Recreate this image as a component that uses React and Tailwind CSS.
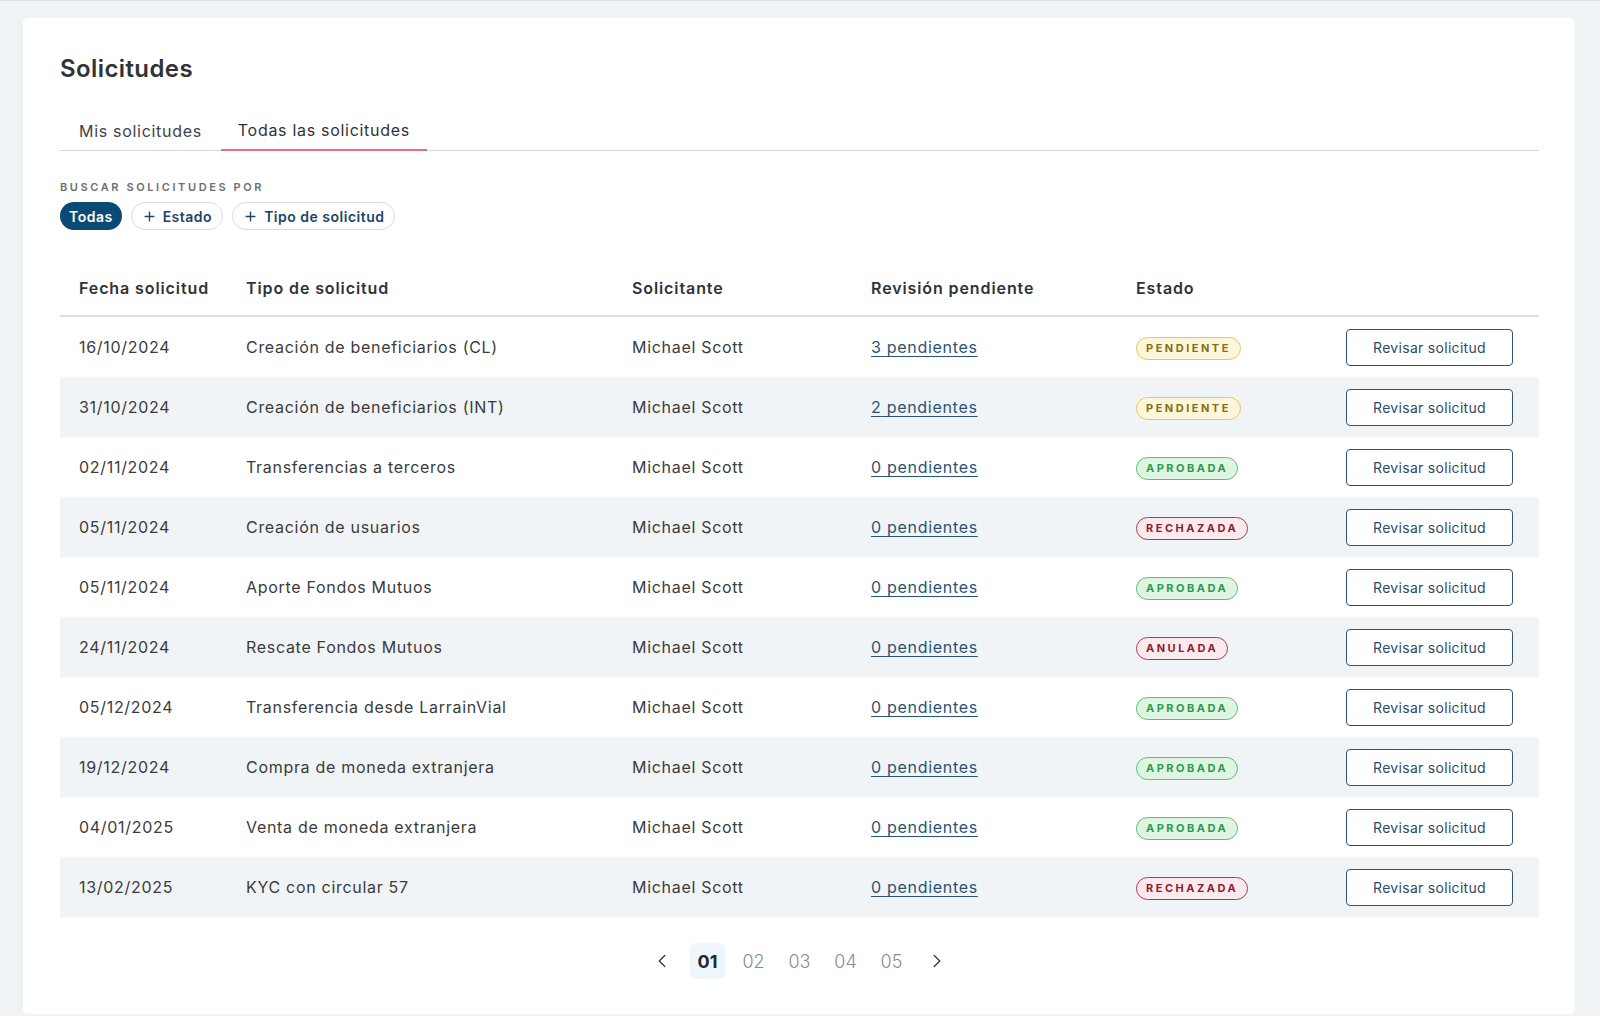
import { ChevronLeft, ChevronRight, Plus } from 'lucide-react';

const filas = [
  { fecha: '16/10/2024', tipo: 'Creación de beneficiarios (CL)', pendientes: 3, estado: 'PENDIENTE' },
  { fecha: '31/10/2024', tipo: 'Creación de beneficiarios (INT)', pendientes: 2, estado: 'PENDIENTE' },
  { fecha: '02/11/2024', tipo: 'Transferencias a terceros', pendientes: 0, estado: 'APROBADA' },
  { fecha: '05/11/2024', tipo: 'Creación de usuarios', pendientes: 0, estado: 'RECHAZADA' },
  { fecha: '05/11/2024', tipo: 'Aporte Fondos Mutuos', pendientes: 0, estado: 'APROBADA' },
  { fecha: '24/11/2024', tipo: 'Rescate Fondos Mutuos', pendientes: 0, estado: 'ANULADA' },
  { fecha: '05/12/2024', tipo: 'Transferencia desde LarrainVial', pendientes: 0, estado: 'APROBADA' },
  { fecha: '19/12/2024', tipo: 'Compra de moneda extranjera', pendientes: 0, estado: 'APROBADA' },
  { fecha: '04/01/2025', tipo: 'Venta de moneda extranjera', pendientes: 0, estado: 'APROBADA' },
  { fecha: '13/02/2025', tipo: 'KYC con circular 57', pendientes: 0, estado: 'RECHAZADA' },
];

const estilosEstado = {
  PENDIENTE: 'bg-[#fdf6da] border-[#e2c766] text-[#857014]',
  APROBADA: 'bg-[#def5e2] border-[#5dbd77] text-[#2e9a4e]',
  RECHAZADA: 'bg-[#fbeaed] border-[#b23a4e] text-[#8e1d30]',
  ANULADA: 'bg-[#fbeaed] border-[#b23a4e] text-[#8e1d30]',
};

const cols = 'grid grid-cols-[168px_386px_239px_264px_229px_193px] items-center';

function Badge({ estado }) {
  return (
    <span className={`inline-flex h-[23px] items-center rounded-full border-[1.5px] px-[9px] text-[11px] font-bold tracking-[2.5px] ${estilosEstado[estado]}`}>
      {estado}
    </span>
  );
}

export default function App() {
  return (
    <div className="min-h-[1016px] border-t border-[#dde2e7] bg-[#f0f3f6] pt-[17px] pl-[23px] pr-[25px] text-[#3b3b3b]" style={{ fontFamily: 'Inter, "Open Sans", sans-serif' }}>
      <div className="rounded-[5px] bg-white px-[37px] pt-[35px] pb-[35px] pr-[36px]">
        <h1 className="text-[24px] leading-[32px] font-semibold tracking-[0.4px] text-[#2f3338]">Solicitudes</h1>

        {/* Tabs */}
        <div className="mt-[26px] flex border-b border-[#d6d9dd] tracking-[0.7px]">
          <button className="h-[39px] px-[19px] text-[16px] text-[#3f4347]">Mis solicitudes</button>
          <button className="-mb-px h-[40px] border-b-2 border-[#e0727f] px-[17px] text-[16px] text-[#2f3338]">Todas las solicitudes</button>
        </div>

        {/* Filtros */}
        <div className="mt-[29px] text-[11px] leading-[14px] font-semibold tracking-[2.6px] text-[#6b6e72]">BUSCAR SOLICITUDES POR</div>
        <div className="mt-[8px] flex gap-[9px] tracking-[0.5px]">
          <button className="h-[28px] rounded-full bg-[#0b4a75] px-[9px] text-[14px] font-semibold text-white">Todas</button>
          <button className="flex h-[28px] items-center gap-[6px] rounded-full border border-[#d9dcdf] px-[10px] text-[14px] font-semibold text-[#1c4568]">
            <Plus size={15} strokeWidth={2.2} /> Estado
          </button>
          <button className="flex h-[28px] items-center gap-[6px] rounded-full border border-[#d9dcdf] px-[10px] text-[14px] font-semibold text-[#1c4568]">
            <Plus size={15} strokeWidth={2.2} /> Tipo de solicitud
          </button>
        </div>

        {/* Tabla */}
        <div className="mt-[31px]">
          <div className={`${cols} h-[56px] border-b-2 border-[#dcdfe2] text-[16px] font-semibold tracking-[0.9px] text-[#2f3338]`}>
            <div className="pl-[19px]">Fecha solicitud</div>
            <div className="pl-[18px]">Tipo de solicitud</div>
            <div className="pl-[18px]">Solicitante</div>
            <div className="pl-[18px]">Revisión pendiente</div>
            <div className="pl-[19px]">Estado</div>
            <div></div>
          </div>
          {filas.map((f, i) => (
            <div key={i} className={`${cols} h-[60px] text-[16px] tracking-[0.7px] ${i % 2 === 1 ? 'bg-[#f0f4f7]' : 'bg-white'}`}>
              <div className="pl-[19px]">{f.fecha}</div>
              <div className="pl-[18px]">{f.tipo}</div>
              <div className="pl-[18px]">Michael Scott</div>
              <div className="pl-[18px]">
                <a href="#" className="text-[#2b5374] underline underline-offset-[3px]">{f.pendientes} pendientes</a>
              </div>
              <div className="pl-[19px] tracking-normal"><Badge estado={f.estado} /></div>
              <div className="pr-[26px] tracking-[0.3px]">
                <button className="h-[37px] w-[167px] rounded-[4px] border-[1.5px] border-[#2d5577] bg-white text-[14px] text-[#2d4b68]">Revisar solicitud</button>
              </div>
            </div>
          ))}
        </div>

        {/* Paginación */}
        <div className="mt-[26px] flex items-center justify-center gap-[11px]">
          <button className="mr-[5px] flex h-[36px] w-[24px] items-center justify-center text-[#3a3d41]"><ChevronLeft size={22} strokeWidth={1.6} /></button>
          {['01', '02', '03', '04', '05'].map((n, i) => (
            <button key={n} className={`h-[36px] w-[35px] rounded-[6px] text-[18px] ${i === 0 ? 'bg-[#eef5fb] font-bold text-[#23272b]' : 'font-light text-[#8a8d90]'}`}>{n}</button>
          ))}
          <button className="ml-[5px] flex h-[36px] w-[24px] items-center justify-center text-[#3a3d41]"><ChevronRight size={22} strokeWidth={1.6} /></button>
        </div>
      </div>
    </div>
  );
}
